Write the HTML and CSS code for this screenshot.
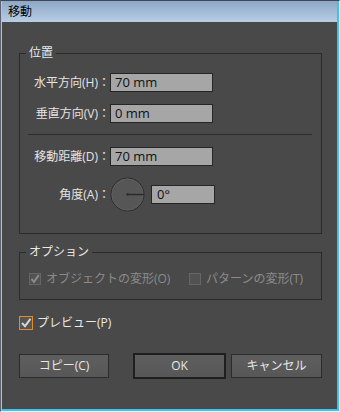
FILE: index.html
```html
<!DOCTYPE html>
<html lang="ja">
<head>
<meta charset="utf-8">
<title>移動</title>
<link rel="stylesheet" href="styles.css">
</head>
<body>
<div class="frame">
  <div class="window">
    <div class="titlebar">移動</div>
    <div class="content">
      <fieldset class="group group-pos">
        <legend>位置</legend>
        <div class="row row1">
          <span class="label">水平方向(H)：</span>
          <div class="field">70 mm</div>
        </div>
        <div class="row row2">
          <span class="label">垂直方向(V)：</span>
          <div class="field">0 mm</div>
        </div>
        <div class="sep"></div>
        <div class="row row3">
          <span class="label">移動距離(D)：</span>
          <div class="field">70 mm</div>
        </div>
        <div class="row row4">
          <span class="label">角度(A)：</span>
          <svg class="dial" width="35" height="35" viewBox="0 0 35 35">
            <circle cx="17.5" cy="17.5" r="16.5" fill="#565656" stroke="#2c2c2c" stroke-width="1"/>
            <circle cx="17.5" cy="17.5" r="15.5" fill="none" stroke="#5e5e5e" stroke-width="1"/>
            <line x1="17.5" y1="17.5" x2="34" y2="17.5" stroke="#2a2a2a" stroke-width="1.4"/>
            <circle cx="17.5" cy="17.5" r="1.2" fill="#2a2a2a"/>
          </svg>
          <div class="field field-angle">0°</div>
        </div>
      </fieldset>

      <fieldset class="group group-opt">
        <legend>オプション</legend>
        <div class="opts">
          <label class="opt opt1 disabled">
            <span class="cb cb-dis">
              <svg width="10" height="10" viewBox="0 0 10 10"><path d="M1.5 5 L4 7.8 L8.8 1.2" fill="none" stroke="#8a8a8a" stroke-width="2"/></svg>
            </span>
            <span>オブジェクトの変形(O)</span>
          </label>
          <label class="opt disabled">
            <span class="cb cb-dis"></span>
            <span>パターンの変形(T)</span>
          </label>
        </div>
      </fieldset>

      <label class="preview">
        <span class="cb cb-on">
          <svg width="12" height="12" viewBox="0 0 12 12"><path d="M2 6 L5 9.2 L10.5 1.8" fill="none" stroke="#d6d6d6" stroke-width="2"/></svg>
        </span>
        <span>プレビュー(P)</span>
      </label>

      <div class="buttons">
        <button class="btn btn-copy">コピー(C)</button>
        <button class="btn btn-ok">OK</button>
        <button class="btn btn-cancel">キャンセル</button>
      </div>
    </div>
  </div>
</div>
</body>
</html>
```
FILE: styles.css
```css
* { box-sizing: border-box; }
html, body {
  margin: 0;
  padding: 0;
  width: 340px;
  height: 412px;
  overflow: hidden;
  background: #494949;
}
body {
  font-family: "Open Sans", "Noto Sans CJK JP", sans-serif;
  font-size: 12px;
}
.frame {
  width: 340px;
  height: 412px;
  border-top: 1px solid #3d4652;
  border-left: 1px solid #5b6470;
  border-right: 1px solid #dff3fb;
  border-bottom: 1px solid #dff3fb;
}
.window {
  height: 100%;
  display: flex;
  flex-direction: column;
  background: #494949;
  border-left: 1px solid #a9c6e4;
  border-right: 2px solid #3cc4ee;
  border-bottom: 2px solid #3cc4ee;
}
.titlebar {
  height: 21px;
  flex: none;
  background: linear-gradient(#8da7c5, #b7cee6);
  color: #000;
  line-height: 21px;
  padding-left: 6px;
  font-size: 12px;
}
.content {
  flex: 1;
  padding: 24px 15px 0 17px;
  color: #e4e4e4;
}
.group {
  margin: 0;
  padding: 0;
  border: 1px solid #2b2b2b;
  min-width: 0;
}
.group legend {
  margin-left: 6px;
  padding: 0 3px;
  line-height: 14px;
  height: 14px;
  color: #e8e8e8;
}
.group-pos {
  padding-top: 13px;
  padding-bottom: 21px;
}
.row {
  display: flex;
  align-items: center;
  height: 19px;
}
.row2 { margin-top: 12px; }
.row3 { margin-top: 12px; }
.row4 { margin-top: 11px; height: 35px; }
.label {
  width: 90px;
  text-align: right;
  white-space: nowrap;
  line-height: 19px;
}
.field {
  width: 103px;
  height: 19px;
  background: #a6a6a6;
  border: 1px solid #262626;
  color: #111;
  padding-left: 4px;
  line-height: 17px;
  font-size: 13px;
}
.field-angle {
  width: 64px;
  margin-left: 6px;
  padding-left: 5px;
}
.dial { display: block; flex: none; }
.sep {
  margin: 11px 9px 0 8px;
  height: 1px;
  background: #2e2e2e;
}
.group-opt {
  margin-top: 11px;
  padding-top: 12px;
  padding-bottom: 13px;
}
.opts {
  display: flex;
  height: 15px;
  align-items: center;
  padding-left: 9px;
}
.opt {
  display: flex;
  align-items: center;
  gap: 5px;
  line-height: 15px;
  white-space: nowrap;
}
.opt1 { width: 160px; }
.disabled { color: #8b8b8b; }
.cb {
  display: inline-flex;
  align-items: center;
  justify-content: center;
  flex: none;
}
.cb-dis {
  width: 12px;
  height: 12px;
  border: 1px solid #666;
  background: #525252;
}
.preview {
  display: flex;
  align-items: center;
  gap: 4px;
  margin-top: 15px;
  height: 16px;
  line-height: 16px;
  color: #e8e8e8;
}
.cb-on {
  width: 14px;
  height: 14px;
  border: 1px solid #e48a2a;
  background: #555;
}
.buttons {
  display: flex;
  align-items: center;
  margin-top: 22px;
  height: 26px;
}
.btn {
  font-family: "Open Sans", "Noto Sans CJK JP", sans-serif;
  font-size: 12px;
  color: #e6e6e6;
  background: linear-gradient(#5e5e5e, #575757);
  border: 1px solid #2b2b2b;
  height: 24px;
  padding: 0;
  line-height: 22px;
  margin: 0;
}
.btn-copy { width: 90px; margin-right: auto; }
.btn-ok {
  width: 93px;
  height: 26px;
  border: 2px solid #1f1f1f;
  margin-right: 5px;
}
.btn-cancel { width: 91px; }
```
